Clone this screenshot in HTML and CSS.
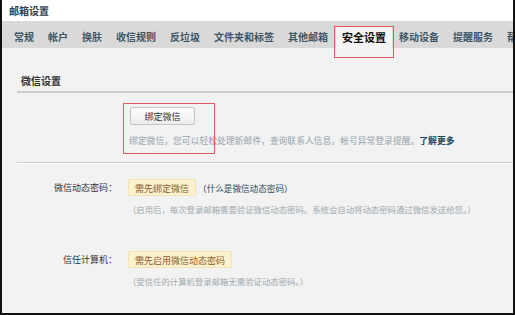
FILE: index.html
```html
<!DOCTYPE html>
<html lang="zh-CN">
<head>
    <meta charset="UTF-8">
    <meta name="viewport" content="width=device-width, initial-scale=1.0">
    <title>邮箱设置</title>
    <link rel="stylesheet" href="styles.css">
</head>
<body>

<div class="frame">
    <div class="title">邮箱设置</div>

    <div class="tabs">
        <span class="tab">常规</span>
        <span class="tab">帐户</span>
        <span class="tab">换肤</span>
        <span class="tab">收信规则</span>
        <span class="tab">反垃圾</span>
        <span class="tab">文件夹和标签</span>
        <span class="tab">其他邮箱</span>
        <span class="tab active">安全设置</span>
        <span class="tab">移动设备</span>
        <span class="tab">提醒服务</span>
        <span class="tab">帮助</span>
    </div>

    <div class="content">
        <div class="section-title">微信设置</div>

        <div class="row bind-row">
            <div></div>
            <div class="bind">
                <span class="mark"></span>
                <button class="btn">绑定微信</button>
                <p class="desc">绑定微信，您可以轻松处理新邮件，查询联系人信息，帐号异常登录提醒。<a href="#" class="more">了解更多</a></p>
            </div>
        </div>

        <div class="divider"></div>

        <div class="row">
            <div class="label">微信动态密码：</div>
            <div>
                <div class="line">
                    <span class="tip">需先绑定微信</span>
                    <span class="aside">（<a href="#">什么是微信动态密码</a>）</span>
                </div>
                <p class="hint">（启用后，每次登录邮箱需要验证微信动态密码。系统会自动将动态密码通过微信发送给您。）</p>
            </div>
        </div>

        <div class="row trust-row">
            <div class="label">信任计算机：</div>
            <div>
                <div class="line">
                    <span class="tip">需先启用微信动态密码</span>
                </div>
                <p class="hint">（受信任的计算机登录邮箱无需验证动态密码。）</p>
            </div>
        </div>
    </div>
</div>

</body>
</html>
```

FILE: styles.css
```css
/* page frame */
body {
    margin: 0;
    font-family: "Noto Sans CJK SC", "Noto Sans", sans-serif;
    background: #fff;
}

.frame {
    box-sizing: border-box;
    width: 515px;
    height: 315px;
    border: 2px solid #111;
    border-top: none;
    display: flex;
    flex-direction: column;
    overflow: hidden;
    background: #fff;
}

.title {
    height: 21px;
    line-height: 22px;
    padding-left: 7px;
    font-size: 10px;
    font-weight: bold;
    color: #2f3e4c;
}

/* tab bar */
.tabs {
    height: 27px;
    background: #d9d9d9;
    display: flex;
    align-items: flex-end;
    padding-left: 5px;
    white-space: nowrap;
}

.tab {
    position: relative;
    height: 22px;
    line-height: 22px;
    padding: 0 7px;
    font-size: 10px;
    font-weight: bold;
    color: #3e5767;
}

.tab.active {
    background: #f4f4f4;
    color: #111;
    font-size: 11px;
    padding: 0 6px;
    margin: 0 0 0 1px;
}

/* red annotation box over the active tab */
.tab.active::after {
    content: "";
    position: absolute;
    left: -2px;
    right: -2px;
    top: 0;
    height: 30px;
    border: 1px solid #df5a5f;
}

/* content area */
.content {
    flex: 1;
    background: #f2f2f2;
}

.section-title {
    margin: 25px 0 0 15px;
    padding: 0 0 2px 4px;
    line-height: 16px;
    font-size: 10px;
    font-weight: bold;
    color: #333;
    border-bottom: 2px solid #cdcdcd;
}

.row {
    display: grid;
    grid-template-columns: 115px 1fr;
    column-gap: 11px;
    font-size: 9px;
}

.bind-row {
    margin-top: 14px;
}

.bind {
    position: relative;
    padding-left: 2px;
}

/* red annotation box round the bind button */
.mark {
    position: absolute;
    left: -5px;
    top: -4px;
    width: 90px;
    height: 49px;
    border: 1px solid #df5a5f;
}

.btn {
    display: block;
    width: 65px;
    height: 18px;
    padding: 0;
    border: 1px solid #c6c6c6;
    border-radius: 2px;
    background: linear-gradient(#fdfdfd, #ececec);
    font-family: inherit;
    font-size: 9px;
    color: #333;
}

.desc {
    margin: 9px 0 0 -1px;
    line-height: 14px;
    font-size: 8.8px;
    color: #97a3ab;
    white-space: nowrap;
}

.more {
    color: #1e4865;
    font-weight: bold;
    text-decoration: none;
}

.divider {
    margin: 14px 0 15px 15px;
    height: 1px;
    background: #cfcfcf;
    border-bottom: 1px solid #fff;
}

.label {
    text-align: right;
    line-height: 17px;
    color: #333;
}

.line {
    display: flex;
    align-items: center;
    height: 17px;
}

.tip {
    height: 17px;
    line-height: 17px;
    padding: 0 6px;
    background: #fcf1cf;
    border: 1px solid #f3e4b8;
    box-sizing: border-box;
    color: #8a5b2a;
}

.aside {
    margin-left: 2px;
    color: #333;
    font-size: 8.6px;
}

.aside a {
    color: #2c4b60;
    text-decoration: none;
}

.hint {
    margin: 6px 0 0;
    line-height: 14px;
    font-size: 8.4px;
    color: #a0aab0;
    white-space: nowrap;
}

.trust-row {
    margin-top: 35px;
}
```
